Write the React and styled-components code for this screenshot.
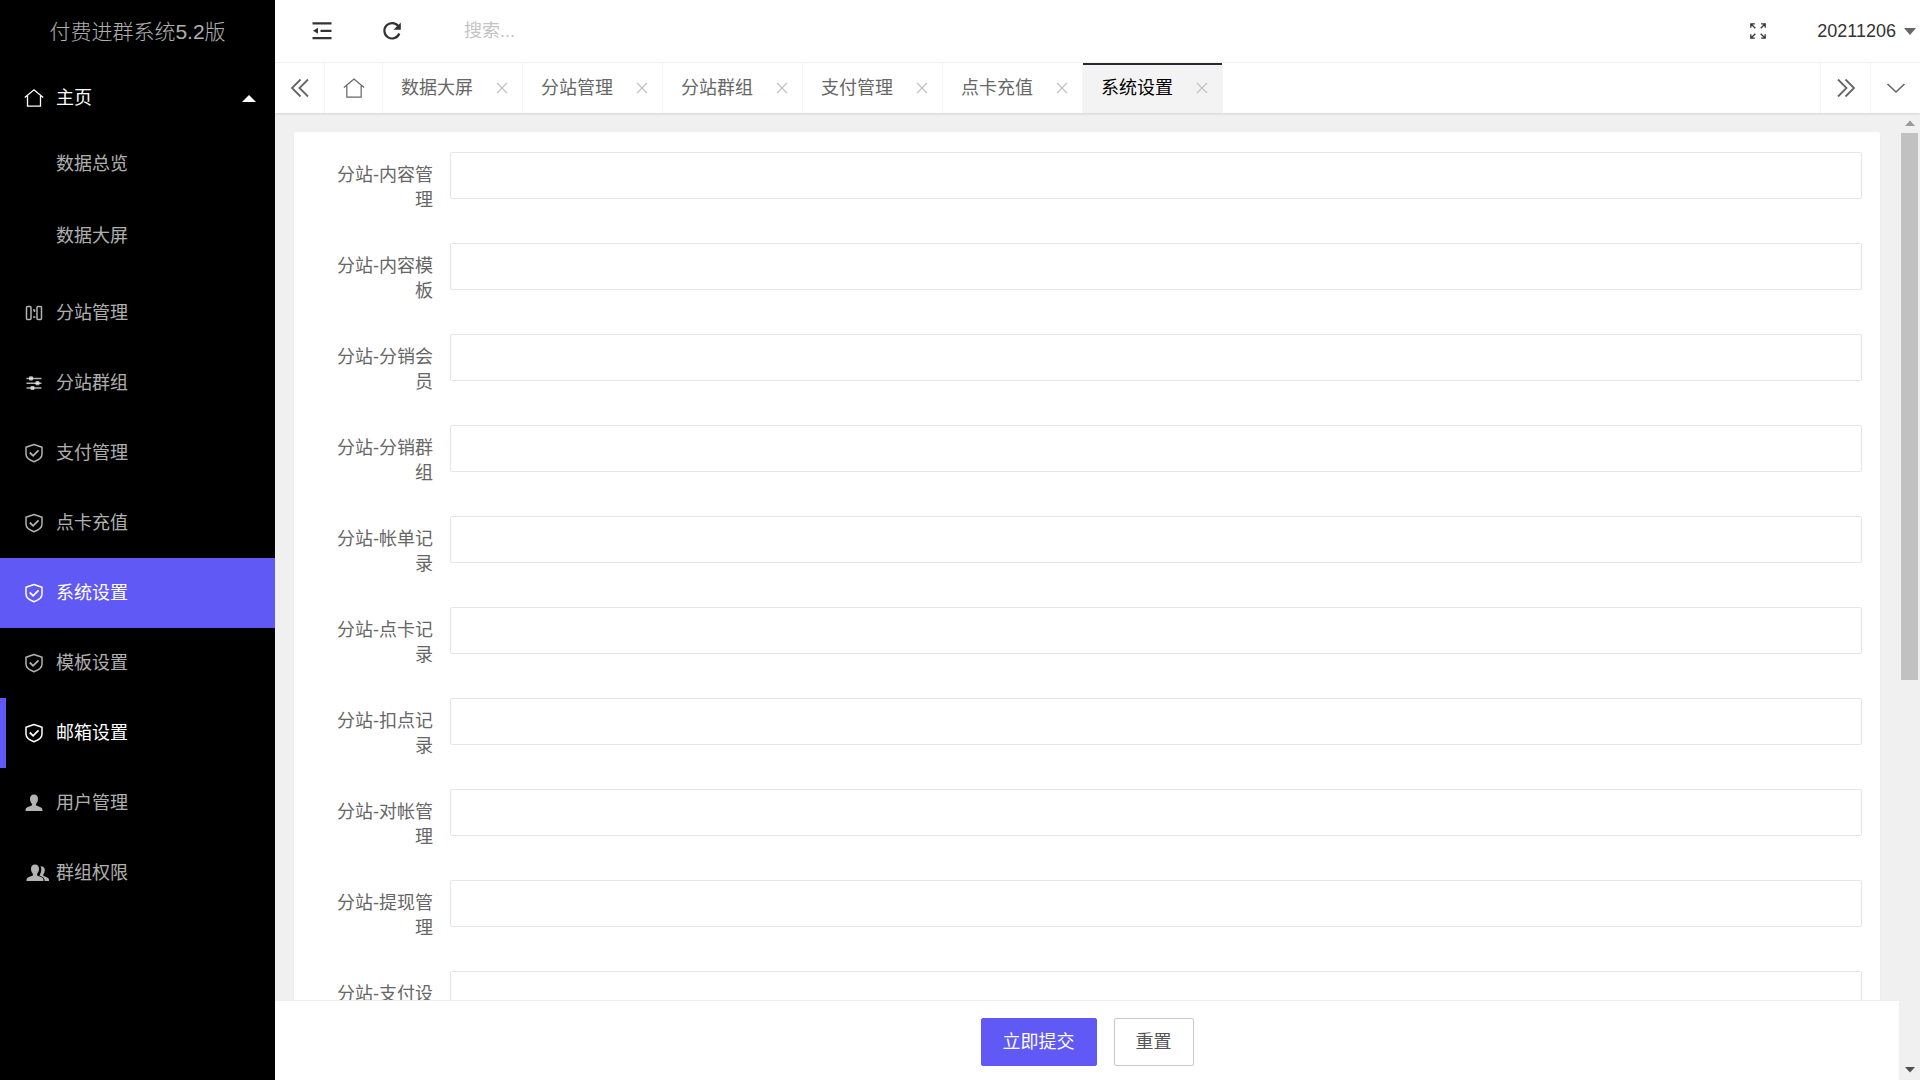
import React from "react";
import styled, { createGlobalStyle } from "styled-components";

const GlobalStyle = createGlobalStyle`
  *, *::before, *::after { box-sizing: border-box; }
  body {
    margin: 0;
    background: #f0f0f0;
    color: #333;
    font: 400 18px/25px "Liberation Sans", "Noto Sans CJK SC", sans-serif;
  }
  button, input { font: inherit; color: inherit; }
  button { padding: 0; border: 0; background: none; cursor: pointer; }
  a { color: inherit; text-decoration: none; }
  svg { display: block; flex: none; }
`;

const accent = "#6159f5";

const Shell = styled.div`
  display: flex;
  height: 100vh;
  overflow: hidden;
`;

const Sidebar = styled.aside`
  flex: none;
  width: 275px;
  background: #000;
  color: rgba(255, 255, 255, 0.7);
`;

const Logo = styled.h1`
  margin: 0;
  height: 63px;
  font-size: 21px;
  font-weight: 300;
  line-height: 63px;
  text-align: center;
`;

const NavList = styled.ul`
  margin: 0;
  padding: 0;
  list-style: none;
`;

const NavLink = styled.a`
  display: flex;
  align-items: center;
  height: 70px;
  padding: 0 19px 0 ${(p) => (p.$marked ? "18px" : "24px")};
  border-left: ${(p) => (p.$marked ? `6px solid ${accent}` : "0")};
  background: ${(p) => (p.$active ? accent : "transparent")};
  color: ${(p) => (p.$bright ? "#fff" : "inherit")};
`;

const NavIcon = styled.span`
  flex: none;
  width: 32px;
`;

const Caret = styled.span`
  margin-left: ${(p) => (p.$push ? "auto" : "8px")};
  border: solid transparent;
  border-width: ${(p) => (p.$up ? "0 7px 7px" : "7px 6px 0")};
  border-bottom-color: ${(p) => (p.$up ? "#fff" : "transparent")};
  border-top-color: ${(p) => (p.$up ? "transparent" : "#666")};
`;

const SubList = styled(NavList)`
  display: grid;
  gap: 10px;
  padding-bottom: 11px;
`;

const SubLink = styled.a`
  display: block;
  padding-left: 56px;
  line-height: 62px;
`;

const Main = styled.div`
  flex: 1;
  min-width: 0;
  display: flex;
  flex-direction: column;
`;

const Header = styled.header`
  display: flex;
  align-items: center;
  height: 63px;
  padding: 0 4px 0 12px;
  border-bottom: 1px solid #f3f3f3;
  background: #fff;
`;

const HeaderButton = styled.button`
  display: grid;
  place-items: center;
  width: 70px;
  height: 62px;
`;

const SearchInput = styled.input`
  width: 280px;
  margin-left: 37px;
  padding: 0;
  border: 0;
  outline: 0;
  background: none;
  &::placeholder { color: #c4c4c4; opacity: 1; }
`;

const HeaderEnd = styled.div`
  display: flex;
  align-items: center;
  gap: 24px;
  margin-left: auto;
`;

const UserButton = styled.button`
  display: flex;
  align-items: center;
`;

const TabBar = styled.div`
  position: relative;
  display: flex;
  flex: none;
  height: 50px;
  background: #fff;
  color: #666;
  box-shadow: 0 1px 2px rgba(0, 0, 0, 0.12);
`;

const TabControl = styled.button`
  display: grid;
  place-items: center;
  width: ${(p) => (p.$wide ? "58px" : "50px")};
  border: solid #f4f4f4;
  border-width: ${(p) => (p.$end ? "0 0 0 1px" : "0 1px 0 0")};
`;

const TabList = styled.nav`
  flex: 1;
  display: flex;
`;

const Tab = styled.div`
  display: flex;
  align-items: center;
  justify-content: space-between;
  width: 140px;
  padding: 0 14px 0 18px;
  border-right: 1px solid #f4f4f4;
  background: ${(p) => (p.$active ? "#f3f3f4" : "#fff")};
  color: ${(p) => (p.$active ? "#000" : "#666")};
  box-shadow: ${(p) => (p.$active ? "inset 0 2px #292a2f" : "none")};
`;

const Frame = styled.div`
  flex: 1;
  min-height: 0;
  display: flex;
`;

const FormPane = styled.form`
  flex: 1;
  min-width: 0;
  display: flex;
  flex-direction: column;
`;

const ScrollArea = styled.div`
  flex: 1;
  min-height: 0;
  overflow-y: auto;
  scrollbar-width: none;
  padding: 19px 19px 0;
`;

const Card = styled.div`
  display: grid;
  gap: 19px;
  padding: 20px 18px;
  border-radius: 2px;
  background: #fff;
  box-shadow: 0 1px 2px rgba(0, 0, 0, 0.05);
`;

const Field = styled.div`
  display: flex;
  align-items: flex-start;
`;

const FieldLabel = styled.label`
  flex: none;
  width: 138px;
  padding: 11px 17px;
  color: #666;
  text-align: right;
`;

const FieldInput = styled.input`
  flex: 1;
  min-width: 0;
  height: 47px;
  padding: 0 12px;
  border: 1px solid #e6e6e6;
  border-radius: 2px;
  outline: 0;
  background: #fff;
`;

const Footer = styled.footer`
  flex: none;
  display: flex;
  justify-content: center;
  gap: 17px;
  padding: 17px 0 14px;
  border-top: 1px solid #eee;
  background: #fff;
`;

const ActionButton = styled.button`
  height: 48px;
  padding: 0 21px;
  border: 1px solid ${(p) => (p.$primary ? accent : "#c9c9c9")};
  border-radius: 2px;
  background: ${(p) => (p.$primary ? accent : "#fff")};
  color: ${(p) => (p.$primary ? "#fff" : "#555")};
`;

const ScrollRail = styled.div`
  flex: none;
  display: flex;
  flex-direction: column;
  align-items: center;
  width: 21px;
  background: #f0f0f0;
`;

const RailArrow = styled.span`
  display: grid;
  place-items: center;
  height: 20px;
  color: ${(p) => (p.$dim ? "#9a9a9a" : "#505050")};
`;

const RailThumb = styled.span`
  flex: 59;
  width: 17px;
  background: #c1c1c1;
`;

const RailRest = styled.span`
  flex: 41;
`;

const Svg = ({ size = 20, width = size, height = size, box = "0 0 20 20", stroke = 1.5, children }) => (
  <svg width={width} height={height} viewBox={box} fill="none" stroke="currentColor" strokeWidth={stroke} aria-hidden="true">
    {children}
  </svg>
);

const HomeIcon = ({ size = 20, stroke = 1.3 }) => (
  <Svg size={size} stroke={stroke}>
    <path d="M.8 9.6 10 1.8l9.200 7.800M3.500 8v10.200h13V8" />
  </Svg>
);

const ColumnsIcon = () => (
  <Svg>
    <rect x="2.500" y="3.500" width="4.500" height="13" rx="1" />
    <rect x="13" y="3.500" width="4.500" height="13" rx="1" />
    <path d="M9 7h1.500v2M9 14h2.500" />
  </Svg>
);

const SlidersIcon = () => (
  <Svg stroke={1.6}>
    <path d="M2.500 5.500h15M2.500 10.200h15M2.500 15h15" />
    <g fill="currentColor" stroke="none">
      <rect x="5" y="3.300" width="4" height="4.200" rx="1" />
      <rect x="11.500" y="8.100" width="4" height="4.200" rx="1" />
      <rect x="6.500" y="12.900" width="4" height="4.200" rx="1" />
    </g>
  </Svg>
);

const ShieldIcon = () => (
  <Svg>
    <path d="M10 1.500 18 4.300v6.700c0 3.600-3.700 6.200-8 7.700-4.300-1.500-8-4.100-8-7.700V4.300z" strokeLinejoin="round" />
    <path d="m5.800 9.500 3.300 3.300 5.400-5.400" strokeWidth="1.800" />
  </Svg>
);

const UserShape = () => (
  <path
    d="M10 1.500c2.700 0 4 1.700 4 4.300 0 2.300-.8 3.900-1.900 5.100v1.700c1.900.9 6.400 1.400 6.400 4.400v1H1.500v-1c0-3 4.500-3.500 6.400-4.400v-1.700C6.800 9.700 6 8.100 6 5.800c0-2.600 1.300-4.300 4-4.300z"
    fill="currentColor"
    stroke="none"
  />
);

const UserIcon = () => (
  <Svg>
    <UserShape />
  </Svg>
);

const UsersIcon = () => (
  <Svg width={26} box="0 0 26 20">
    <g transform="translate(1 0)">
      <UserShape />
      <path
        d="M15.500 3.200c3 0 4.300 1.500 4.300 3.900 0 2-.6 3.200-1.500 4.200v1.500c1.600.8 5.700 1.700 5.700 4.200v1h-4.300c0-3.300-2.200-4.300-5.200-5.500.9-1.800 1.800-3.600 1.800-6.200 0-1.200-.3-2.200-.8-3.100z"
        fill="currentColor"
        stroke="none"
      />
    </g>
  </Svg>
);

const MenuIcon = () => (
  <Svg stroke={2.2}>
    <path d="M.5 2.300h19M8.500 9.800h11M.5 17.200h19" />
    <path d="m1 9.800 5-3v6z" fill="currentColor" stroke="none" />
  </Svg>
);

const RefreshIcon = () => (
  <Svg stroke={2.2}>
    <path d="M16.300 5.200A7.700 7.700 0 1 0 17.300 12.500" />
    <path d="M18.800 1.500v7.300h-7.300z" fill="currentColor" stroke="none" />
  </Svg>
);

const ExpandIcon = () => (
  <Svg size={18} stroke={1.4}>
    <path d="M2 6.500V2h4.500M2 2l5 5M13.500 2H18v4.500M18 2l-5 5M2 13.500V18h4.500M2 18l5-5M13.500 18H18v-4.500M18 18l-5-5" />
  </Svg>
);

const DoubleChevron = ({ right }) => (
  <Svg stroke={1.800}>
    <path d={right ? "m2 1.500 8.500 8.500L2 18.500M9.500 1.500 18 10l-8.500 8.500" : "M10.500 1.500 2 10l8.500 8.500M18 1.500 9.500 10l8.500 8.500"} />
  </Svg>
);

const ChevronDown = () => (
  <Svg stroke={1.6}>
    <path d="m1.500 6 8.500 8 8.500-8" />
  </Svg>
);

const CloseIcon = () => (
  <Svg size={12} box="0 0 12 12" stroke={1.2}>
    <path d="m1 1 10 10M11 1 1 11" />
  </Svg>
);

const RailTriangle = ({ down }) => (
  <svg width="10" height="6" viewBox="0 0 10 6" fill="currentColor" aria-hidden="true">
    <path d={down ? "M0 0h10L5 5.500z" : "M0 6h10L5 .5z"} />
  </svg>
);

const TabClose = styled.button`
  display: grid;
  place-items: center;
  height: 20px;
  color: #c2c2c2;
`;

const navItems = [
  { text: "分站管理", Icon: ColumnsIcon },
  { text: "分站群组", Icon: SlidersIcon },
  { text: "支付管理", Icon: ShieldIcon },
  { text: "点卡充值", Icon: ShieldIcon },
  { text: "系统设置", Icon: ShieldIcon, active: true },
  { text: "模板设置", Icon: ShieldIcon },
  { text: "邮箱设置", Icon: ShieldIcon, marked: true },
  { text: "用户管理", Icon: UserIcon },
  { text: "群组权限", Icon: UsersIcon },
];

const tabs = ["数据大屏", "分站管理", "分站群组", "支付管理", "点卡充值", "系统设置"];

const fields = [
  "分站-内容管理",
  "分站-内容模板",
  "分站-分销会员",
  "分站-分销群组",
  "分站-帐单记录",
  "分站-点卡记录",
  "分站-扣点记录",
  "分站-对帐管理",
  "分站-提现管理",
  "分站-支付设置",
];

export default function App() {
  return (
    <>
      <GlobalStyle />
      <Shell>
        <Sidebar>
          <Logo>付费进群系统5.2版</Logo>
          <NavList>
            <li>
              <NavLink href="#home" $bright>
                <NavIcon><HomeIcon /></NavIcon>
                主页
                <Caret $up $push />
              </NavLink>
              <SubList>
                <li><SubLink href="#overview">数据总览</SubLink></li>
                <li><SubLink href="#screen">数据大屏</SubLink></li>
              </SubList>
            </li>
            {navItems.map(({ text, Icon, active, marked }) => (
              <li key={text}>
                <NavLink href="#nav" $active={active} $marked={marked} $bright={active || marked}>
                  <NavIcon><Icon /></NavIcon>
                  {text}
                </NavLink>
              </li>
            ))}
          </NavList>
        </Sidebar>

        <Main>
          <Header>
            <HeaderButton type="button" aria-label="侧边伸缩"><MenuIcon /></HeaderButton>
            <HeaderButton type="button" aria-label="刷新"><RefreshIcon /></HeaderButton>
            <SearchInput type="text" placeholder="搜索..." aria-label="搜索" />
            <HeaderEnd>
              <HeaderButton type="button" aria-label="全屏"><ExpandIcon /></HeaderButton>
              <UserButton type="button">
                20211206
                <Caret />
              </UserButton>
            </HeaderEnd>
          </Header>

          <TabBar>
            <TabControl type="button" aria-label="向左"><DoubleChevron /></TabControl>
            <TabControl type="button" aria-label="主页" $wide><HomeIcon size={22} stroke={1.1} /></TabControl>
            <TabList>
              {tabs.map((text, i) => (
                <Tab key={text} $active={i === tabs.length - 1}>
                  <a href="#tab">{text}</a>
                  <TabClose type="button" aria-label={`关闭${text}`}><CloseIcon /></TabClose>
                </Tab>
              ))}
            </TabList>
            <TabControl type="button" aria-label="向右" $end><DoubleChevron right /></TabControl>
            <TabControl type="button" aria-label="更多" $end><ChevronDown /></TabControl>
          </TabBar>

          <Frame>
            <FormPane onSubmit={(e) => e.preventDefault()}>
              <ScrollArea>
                <Card>
                  {fields.map((label, i) => (
                    <Field key={label}>
                      <FieldLabel htmlFor={`field-${i}`}>{label}</FieldLabel>
                      <FieldInput id={`field-${i}`} type="text" />
                    </Field>
                  ))}
                </Card>
              </ScrollArea>
              <Footer>
                <ActionButton type="submit" $primary>立即提交</ActionButton>
                <ActionButton type="reset">重置</ActionButton>
              </Footer>
            </FormPane>
            <ScrollRail aria-hidden="true">
              <RailArrow $dim><RailTriangle /></RailArrow>
              <RailThumb />
              <RailRest />
              <RailArrow><RailTriangle down /></RailArrow>
            </ScrollRail>
          </Frame>
        </Main>
      </Shell>
    </>
  );
}
